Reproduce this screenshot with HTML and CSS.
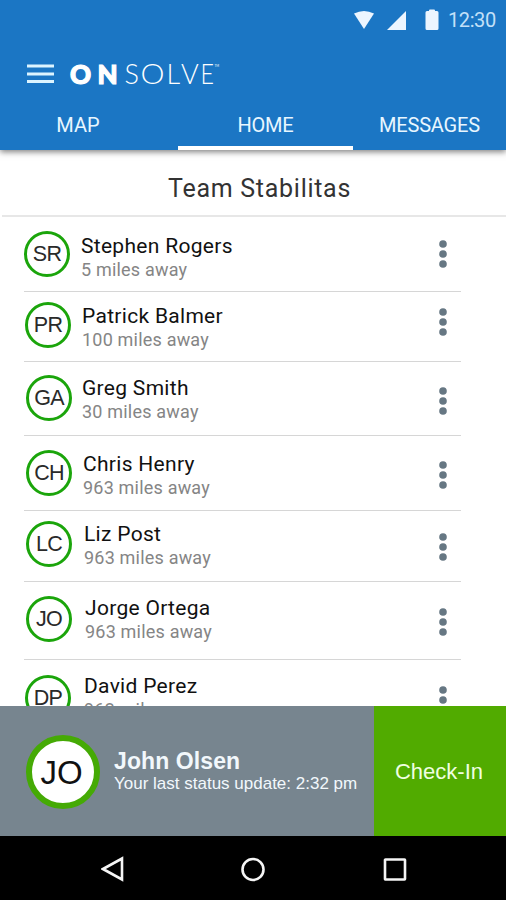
FILE: index.html
```html
<!DOCTYPE html>
<html lang="en">
<head>
<meta charset="utf-8">
<title>OnSolve</title>
<link rel="stylesheet" href="styles.css">
</head>
<body>
<div class="phone">
  <header class="header">
    <div class="status">
      <svg width="22" height="20" viewBox="0 0 22 20"><path d="M1 3.6Q11-1.8 21 3.6L11 19Z"/></svg>
      <svg class="signal" width="20" height="20" viewBox="0 0 20 20"><path d="M0 20L19 1V20Z"/></svg>
      <svg class="battery" width="14" height="22" viewBox="0 0 14 22"><path d="M4 1.5Q4 .5 5 .5H9Q10 .5 10 1.5V2H12Q13.5 2 13.5 3.5V19.5Q13.5 21 12 21H2Q.5 21 .5 19.5V3.500Q.5 2 2 2H4Z"/></svg>
      <span class="clock">12:30</span>
    </div>
    <div class="brand">
      <svg class="burger" width="27" height="20" viewBox="0 0 27 20"><path d="M0 2H27M0 10H27M0 17.500H27"/></svg>
      <svg class="logo" width="152" height="28" viewBox="0 0 152 28">
        <text class="logo-bold" x="0 27.500" y="23.500">ON</text>
        <text class="logo-light" x="54.500" y="23.500">S</text>
        <text class="logo-light" x="70.500" y="23.500" textLength="24" lengthAdjust="spacingAndGlyphs">O</text>
        <text class="logo-light" x="96.500 111" y="23.500">LV</text>
        <text class="logo-light" x="130.500" y="23.500" textLength="13.500" lengthAdjust="spacingAndGlyphs">E</text>
        <text class="logo-tm" x="144.500" y="7">TM</text>
      </svg>
    </div>
    <nav class="tabs">
      <div class="tab tab-map"><span>MAP</span></div>
      <div class="tab active"><span>HOME</span></div>
      <div class="tab tab-msg"><span>MESSAGES</span></div>
    </nav>
  </header>
  <h1 class="title"><span>Team Stabilitas</span></h1>
  <main class="list">
    <div class="row r1"><div class="avatar">SR</div><div class="info"><div class="name">Stephen Rogers</div><div class="dist">5 miles away</div></div><svg class="dots" width="8" height="28" viewBox="0 0 8 28"><circle cx="4" cy="4" r="3.800"/><circle cx="4" cy="14" r="3.800"/><circle cx="4" cy="24" r="3.800"/></svg></div>
    <div class="row r2"><div class="avatar">PR</div><div class="info"><div class="name">Patrick Balmer</div><div class="dist">100 miles away</div></div><svg class="dots" width="8" height="28" viewBox="0 0 8 28"><circle cx="4" cy="4" r="3.800"/><circle cx="4" cy="14" r="3.800"/><circle cx="4" cy="24" r="3.800"/></svg></div>
    <div class="row r3"><div class="avatar">GA</div><div class="info"><div class="name">Greg Smith</div><div class="dist">30 miles away</div></div><svg class="dots" width="8" height="28" viewBox="0 0 8 28"><circle cx="4" cy="4" r="3.800"/><circle cx="4" cy="14" r="3.800"/><circle cx="4" cy="24" r="3.800"/></svg></div>
    <div class="row r4"><div class="avatar">CH</div><div class="info"><div class="name">Chris Henry</div><div class="dist">963 miles away</div></div><svg class="dots" width="8" height="28" viewBox="0 0 8 28"><circle cx="4" cy="4" r="3.800"/><circle cx="4" cy="14" r="3.800"/><circle cx="4" cy="24" r="3.800"/></svg></div>
    <div class="row r5"><div class="avatar">LC</div><div class="info"><div class="name">Liz Post</div><div class="dist">963 miles away</div></div><svg class="dots" width="8" height="28" viewBox="0 0 8 28"><circle cx="4" cy="4" r="3.800"/><circle cx="4" cy="14" r="3.800"/><circle cx="4" cy="24" r="3.800"/></svg></div>
    <div class="row r6"><div class="avatar">JO</div><div class="info"><div class="name">Jorge Ortega</div><div class="dist">963 miles away</div></div><svg class="dots" width="8" height="28" viewBox="0 0 8 28"><circle cx="4" cy="4" r="3.800"/><circle cx="4" cy="14" r="3.800"/><circle cx="4" cy="24" r="3.800"/></svg></div>
    <div class="row r7"><div class="avatar">DP</div><div class="info"><div class="name">David Perez</div><div class="dist">963 miles away</div></div><svg class="dots" width="8" height="28" viewBox="0 0 8 28"><circle cx="4" cy="4" r="3.800"/><circle cx="4" cy="14" r="3.800"/><circle cx="4" cy="24" r="3.800"/></svg></div>
  </main>
  <section class="me">
    <div class="me-avatar">JO</div>
    <div class="me-info"><div class="me-name">John Olsen</div><div class="me-status">Your last status update: 2:32 pm</div></div>
    <button class="checkin">Check-In</button>
  </section>
  <footer class="navbar">
    <svg width="24" height="26" viewBox="0 0 24 26"><path d="M21 2.500V23.500L2 13Z"/></svg>
    <svg width="26" height="26" viewBox="0 0 26 26"><circle cx="12" cy="13.500" r="10.500"/></svg>
    <svg width="24" height="24" viewBox="0 0 24 24"><rect x="2" y="2.500" width="20" height="20" rx=".5"/></svg>
  </footer>
</div>
</body>
</html>
```
FILE: styles.css
```css
* { box-sizing: border-box; }
body { margin: 0; background: #fff; font-family: Roboto, sans-serif; }
.phone { width: 506px; height: 900px; display: flex; flex-direction: column; overflow: hidden; }
.phone > * { flex: none; }
svg { display: block; flex: none; }

.header { height: 150px; background: #1b76c4; color: #e8f6ff; box-shadow: 0 2px 6px rgba(0,0,0,.5); position: relative; display: flex; flex-direction: column; }
.status { height: 40px; display: flex; align-items: center; padding-left: 353px; fill: #ecf5ff; }
.signal { margin-left: 12px; }
.battery { margin-left: 18px; }
.clock { margin-left: 9px; font-size: 20px; color: #c3e0f8; letter-spacing: -.4px; white-space: nowrap; }
.brand { height: 60px; display: flex; padding-left: 27px; }
.burger { margin-top: 24px; stroke: #dcf4ff; stroke-width: 3; }
.logo { margin: 20px 0 0 16px; fill: #fff; font-family: Lato, sans-serif; overflow: visible; }
.logo-bold { font-size: 26px; font-weight: 900; stroke: #fff; stroke-width: 1.2; }
.logo-light { font-size: 27px; font-weight: 300; }
.logo-tm { font-size: 3px; }
.tabs { height: 50px; display: grid; grid-template-columns: 178px 175px 153px; font-size: 20px; }
.tab { display: flex; justify-content: center; line-height: 24px; padding-top: 13px; }
.tab-map { padding-right: 22px; }
.tab-msg { letter-spacing: -.2px; }
.active { border-bottom: 4px solid #fff; letter-spacing: -.2px; }

.title { margin: 0 0 0 2px; height: 67px; padding: 25px 0 0 166px; border-bottom: 2px solid #e7e7e7; font-size: 25px; line-height: 28px; font-weight: 400; letter-spacing: .72px; color: #333; white-space: nowrap; }
.list { height: 489px; overflow: hidden; padding-left: 24px; }
.row { width: 437px; display: flex; border-bottom: 1px solid #d6d6d6; }
.avatar { width: 46px; height: 46px; flex: none; border: 3px solid #1ba50b; border-radius: 50%; display: flex; align-items: center; justify-content: center; font: 21.5px/1 "Liberation Sans", sans-serif; letter-spacing: -.7px; padding-top: 1px; color: #2a2a2a; }
.info { flex: 1; white-space: nowrap; }
.name { font-size: 21px; line-height: 24px; color: #111; letter-spacing: .3px; }
.dist { font-size: 18px; line-height: 24px; color: #858585; letter-spacing: .2px; }
.dots { margin-right: 14px; fill: #667783; }
.r1 { height: 75px; }
.r1 .avatar { margin: 14px 11px 0 0; }
.r1 .info { padding-top: 17px; }
.r1 .dots { margin-top: 23px; }
.r2 { height: 70px; }
.r2 .avatar { margin: 10px 11px 0 1px; }
.r2 .info { padding-top: 12px; }
.r2 .dots { margin-top: 16px; }
.r3 { height: 74px; }
.r3 .avatar { margin: 13px 10px 0 2px; }
.r3 .info { padding-top: 14px; }
.r3 .dots { margin-top: 25px; }
.r4 { height: 75px; }
.r4 .avatar { margin: 14px 11px 0 2px; }
.r4 .info { padding-top: 16px; }
.r4 .dots { margin-top: 25px; }
.r5 { height: 71px; }
.r5 .avatar { margin: 10px 12px 0 2px; }
.r5 .info { padding-top: 11px; }
.r5 .dots { margin-top: 22px; }
.r6 { height: 78px; }
.r6 .avatar { margin: 14px 13px 0 2px; }
.r6 .info { padding-top: 14px; }
.r6 .dots { margin-top: 26px; }
.r7 { height: 76px; }
.r7 .avatar { margin: 15px 13px 0 1px; }
.r7 .info { padding-top: 14px; }
.r7 .dots { margin-top: 26px; }

.me { height: 130px; display: flex; background: #77858f; font-family: "Liberation Sans", sans-serif; color: #f2f8fc; }
.me-avatar { width: 74px; height: 74px; margin: 29px 0 0 26px; padding: 2px 3px 0 0; flex: none; border: 6px solid #45aa05; border-radius: 50%; background: #fff; color: #111; font-size: 33px; display: flex; align-items: center; justify-content: center; }
.me-info { width: 274px; padding: 42px 0 0 14px; white-space: nowrap; }
.me-name { font-size: 23px; line-height: 26px; font-weight: 700; letter-spacing: .1px; }
.me-status { font-size: 17px; line-height: 20px; }
.checkin { flex: 1; border: 0; margin: 0; padding: 2px 2px 0 0; background: #51ab00; color: #efffe0; font: 22px "Liberation Sans", sans-serif; }

.navbar { height: 64px; background: #000; display: flex; align-items: center; justify-content: space-between; padding: 2px 99px 0 101px; fill: none; stroke: #f5f5f5; stroke-width: 2.6; }
```
